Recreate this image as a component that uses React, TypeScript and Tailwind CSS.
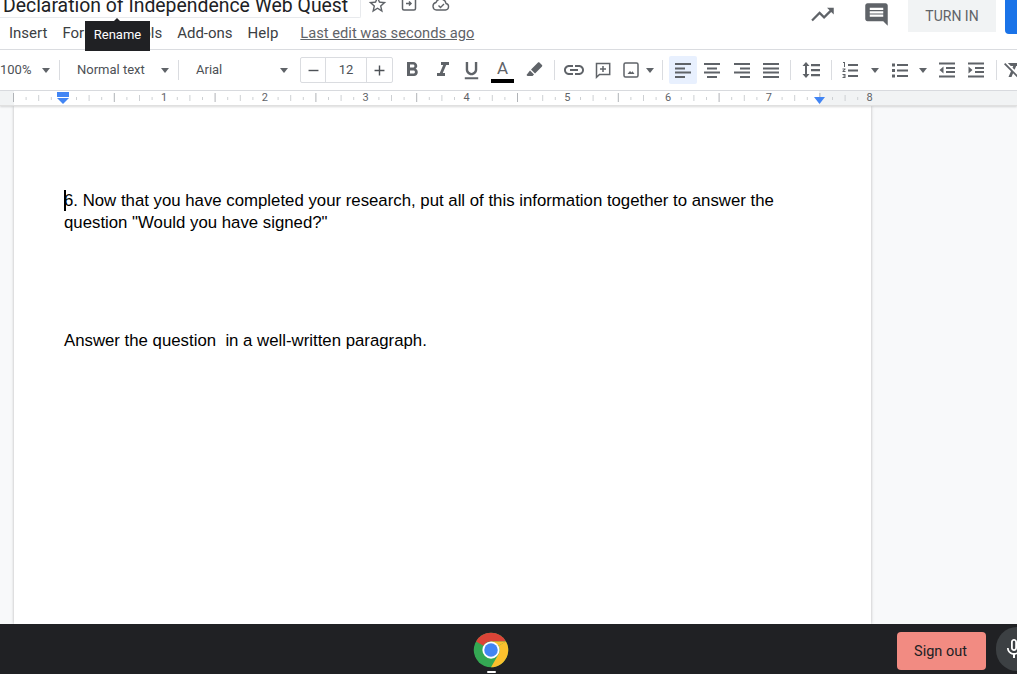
import React from "react";
import {
  MdStarBorder, MdTrendingUp, MdComment, MdFormatBold, MdFormatItalic, MdFormatUnderlined, MdLink,
  MdFormatClear, MdMicNone, MdRemove, MdAdd,
} from "react-icons/md";

const Caret = ({ className = "" }: { className?: string }) => (
  <span className={`w-0 h-0 border-x-[4.5px] border-x-transparent border-t-[5px] border-t-[#5f6368] shrink-0 ${className}`} />
);
const Div = ({ className = "" }: { className?: string }) => (
  <span className={`w-px h-[20px] bg-[#dadce0] shrink-0 ${className}`} />
);
const Ic = ({ I, size = 24, className = "" }: { I: any; size?: number; className?: string }) => (
  <span className={`w-[20px] h-[20px] flex items-center justify-center shrink-0 text-[#5f6368] ${className}`}>
    <I size={size} className="shrink-0" />
  </span>
);
const Draw = ({ d, className = "", extra }: { d: string; className?: string; extra?: React.ReactNode }) => (
  <svg width="20" height="20" viewBox="0 0 20 20" className={`shrink-0 text-[#5f6368] ${className}`} fill="currentColor">
    <path d={d} />
    {extra}
  </svg>
);

const ALIGN_L = "M2 3h16v2H2zM2 7.500h10v2H2zM2 11.500h16v2H2zM2 16h10v2H2z";
const ALIGN_C = "M2 3h16v2H2zM5 7.500h10v2H5zM2 11.500h16v2H2zM5 16h10v2H5z";
const ALIGN_R = "M2 3h16v2H2zM8 7.500h10v2H8zM2 11.500h16v2H2zM8 16h10v2H8z";
const ALIGN_J = "M2 3h16v2H2zM2 7.500h16v2H2zM2 11.500h16v2H2zM2 16h16v2H2z";
const SPACING = "M5 2l3.500 4H6v8h2.500L5 18l-3.500-4H4V6H1.500zM10 4h9v2.200h-9zM10 9h9v2.200h-9zM10 14h9v2.200h-9z";
const NUMBERED = "M8 4h10v2H8zM8 9.500h10v2H8zM8 15h10v2H8zM3 2h2v5H4V3H3zM2.500 8.500h3v.9L3.800 11h1.700v1h-3v-.9L4.200 9.500H2.500zM2.500 14h3v4h-3v-1h2v-.5h-1.200v-.9h1.200V15h-2z";
const BULLETS = "M7 4h11v2H7zM7 9.500h11v2H7zM7 15h11v2H7zM2 3.500h3v3H2zM2 9h3v3H2zM2 14.500h3v3H2z";
const INDENT_L = "M2 2.500h16v2H2zM9 7h9v2H9zM9 11h9v2H9zM2 15.500h16v2H2zM6.500 6.500v7L2.500 10z";
const INDENT_R = "M2 2.500h16v2H2zM9 7h9v2H9zM9 11h9v2H9zM2 15.500h16v2H2zM2.500 6.500v7l4-3.500z";
const MARKER = "M14 2.500c.4-.4 1-.4 1.400 0l2.600 2.600c.4.4.4 1 0 1.400l-7 7-4-4zM6 10.500l4 4-1.500 1.500H3.500l-1-1z";

function RulerTicks() {
  const t: React.ReactNode[] = [];
  for (let i = 0; i < 69; i++) {
    const x = 13.5 + (i * 100.8) / 8;
    if (i % 8 === 0 || i % 8 === 4) continue;
    t.push(<line key={i} x1={x} x2={x} y1={i % 2 === 0 ? 4 : 6} y2={i % 2 === 0 ? 10 : 9} stroke="#cdd0d3" strokeWidth="1" />);
  }
  return (
    <svg className="absolute left-0 top-0" width="1017" height="14">
      {Array.from({ length: 9 }).map((_, i) => (
        <line key={i} x1={13.5 + 100.8 * i} x2={13.5 + 100.8 * i} y1="2" y2="11" stroke="#b0b3b7" />
      ))}
      {t}
    </svg>
  );
}

function Chrome() {
  return (
    <svg width="36" height="36" viewBox="0 0 48 48">
      <circle cx="24" cy="24" r="23" fill="#34a853" />
      <path d="M24 1a23 23 0 0 1 19.900 11.500H24a11.500 11.500 0 0 0-10 5.800L4.100 12.500A23 23 0 0 1 24 1z" fill="#db4437" />
      <path d="M43.900 12.500A23 23 0 0 1 24 47l10-17.200a11.500 11.500 0 0 0 0-11.600z" fill="#fbc02d" />
      <path d="M43.900 12.500H24l10 5.700z" fill="#fbc02d" />
      <circle cx="24" cy="24" r="11.500" fill="#fff" />
      <circle cx="24" cy="24" r="9" fill="#4285f4" />
    </svg>
  );
}

export default function App() {
  return (
    <div className="w-[1017px] h-[674px] flex flex-col overflow-hidden bg-white relative font-['Roboto',sans-serif]">
      {/* Title and menu */}
      <header className="h-[50px] shrink-0 border-b border-[#dadce0] flex justify-between overflow-hidden">
        <div className="flex flex-col">
          <div className="h-[18px] flex items-start">
            <span className="w-[361px] h-[18px] pl-[3px] border-r border-b border-[#e8eaed] rounded-br-[2px] text-[19.400px] leading-[12px] text-[#202124] whitespace-nowrap">
              Declaration of Independence Web Quest
            </span>
            <MdStarBorder size={21} className="ml-[6px] -mt-[6px] text-[#5f6368]" />
            <svg width="18" height="18" viewBox="0 0 18 18" className="ml-[12px] -mt-[4px] text-[#5f6368]" fill="none" stroke="currentColor" strokeWidth="1.500">
              <rect x="2.500" y="1" width="13" height="13" rx="1.500" />
              <path d="M6 7.500h5M9 5.500l2 2-2 2" />
            </svg>
            <svg width="20" height="20" viewBox="0 0 20 20" className="ml-[13px] -mt-[5px] text-[#5f6368]" fill="none" stroke="currentColor" strokeWidth="1.400">
              <path d="M5.500 15h9a3.300 3.300 0 0 0 .5-6.500A5.200 5.200 0 0 0 5 7.500 3.800 3.800 0 0 0 5.500 15z" />
              <path d="M7.500 10.500l2 2 3.500-3.500" />
            </svg>
          </div>
          <nav className="flex items-center gap-[15px] h-[30px] text-[15px] text-[#3c4043] pl-[9px]">
            <span>Insert</span>
            <span>Format</span>
            <span>Tools</span>
            <span>Add-ons</span>
            <span>Help</span>
            <span className="ml-[7px] text-[14.700px] text-[#5f6368] underline">Last edit was seconds ago</span>
          </nav>
        </div>
        <div className="flex items-start">
          <MdTrendingUp size={27} className="mt-[1px] text-[#5f6368]" />
          <MdComment size={27} className="ml-[27px] mt-[1px] text-[#5f6368]" />
          <span className="ml-[18px] w-[88px] h-[32px] bg-[#f1f3f4] text-[#5f6368] text-[14px] flex items-center justify-center">TURN IN</span>
          <span className="ml-[9px] w-[12px] h-[34px] bg-[#1a73e8] rounded-bl-[4px]" />
        </div>
      </header>

      {/* Toolbar */}
      <div className="h-[41px] shrink-0 border-b border-[#dadce0] flex items-center text-[#4d5156] overflow-hidden text-[13px] whitespace-nowrap">
        <span className="w-[29px] shrink-0">100%</span>
        <Caret className="ml-[13px]" />
        <Div className="ml-[9px]" />
        <span className="ml-[17px] w-[70px] shrink-0">Normal text</span>
        <Caret className="ml-[14px]" />
        <Div className="ml-[9px]" />
        <span className="ml-[17px] w-[84px] shrink-0">Arial</span>
        <Caret className="ml-[0px]" />
        <span className="ml-[12px] w-[93px] h-[26px] border border-[#dadce0] rounded-[2px] flex items-center shrink-0">
          <span className="w-[24px] h-full flex items-center justify-center"><MdRemove size={17} /></span>
          <span className="w-[42px] h-full border-x border-[#dadce0] flex items-center justify-center text-[13px]">12</span>
          <span className="flex-1 h-full flex items-center justify-center"><MdAdd size={17} /></span>
        </span>
        <Ic I={MdFormatBold} className="ml-[9px]" />
        <Ic I={MdFormatItalic} className="ml-[11px]" />
        <Ic I={MdFormatUnderlined} size={23} className="ml-[8px]" />
        <span className="ml-[10px] w-[23px] h-[26px] flex flex-col items-center shrink-0 mt-[1px]">
          <span className="text-[17px] leading-[20px] text-[#5f6368]">A</span>
          <span className="w-[23px] h-[4px] bg-black mt-[1px]" />
        </span>
        <Draw d={MARKER} className="ml-[10px]" />
        <Div className="ml-[10px]" />
        <Ic I={MdLink} className="ml-[9px]" />
        <svg width="20" height="20" viewBox="0 0 20 20" className="ml-[9px] shrink-0 text-[#5f6368]" fill="none" stroke="currentColor" strokeWidth="1.500">
          <path d="M3.500 3.500h13.200v11H6.500l-3 2.800z" />
          <path d="M10 6v6M7 9h6" />
        </svg>
        <svg width="20" height="20" viewBox="0 0 20 20" className="ml-[8px] shrink-0 text-[#5f6368]" fill="none" stroke="currentColor" strokeWidth="1.500">
          <rect x="3" y="3" width="14" height="14" rx="1.500" />
          <path d="M6.500 14l2.500-3 1.500 1.500 1-1.200 2 2.700z" fill="currentColor" stroke="none" />
        </svg>
        <Caret className="ml-[5px]" />
        <Div className="ml-[8px]" />
        <span className="ml-[6px] w-[28px] h-[28px] bg-[#e8f0fe] flex items-center justify-center rounded-[2px] shrink-0">
          <Draw d={ALIGN_L} className="text-[#1a73e8]" />
        </span>
        <Draw d={ALIGN_C} className="ml-[5px]" />
        <Draw d={ALIGN_R} className="ml-[10px]" />
        <Draw d={ALIGN_J} className="ml-[9px]" />
        <Div className="ml-[9px]" />
        <Draw d={SPACING} className="ml-[10px]" />
        <Div className="ml-[10px]" />
        <Draw d={NUMBERED} className="ml-[8px]" />
        <Caret className="ml-[11px]" />
        <Draw d={BULLETS} className="ml-[11px]" />
        <Caret className="ml-[9px]" />
        <Draw d={INDENT_L} className="ml-[10px]" />
        <Draw d={INDENT_R} className="ml-[9px]" />
        <Div className="ml-[10px]" />
        <Ic I={MdFormatClear} className="ml-[7px]" />
      </div>

      {/* Ruler */}
      <div className="h-[15px] shrink-0 bg-[#f1f3f4] border-b border-[#e0e0e0] shadow-[0_1px_2px_rgba(0,0,0,0.15)] relative z-10 flex">
        <div className="absolute left-[14px] top-0 h-[14px] w-[805px] bg-white" />
        <RulerTicks />
        <div className="relative flex pl-[161px] text-[11px] leading-[14px] text-[#5f6368]">
          {[1, 2, 3, 4, 5, 6, 7, 8].map((n) => (
            <span key={n} className="w-[100.8px] shrink-0">{n}</span>
          ))}
        </div>
        <svg className="absolute left-[56px] top-[1px]" width="14" height="14" viewBox="0 0 14 14">
          <rect x="1" y="0" width="12" height="5" fill="#4285f4" />
          <path d="M1 6h12l-6 6z" fill="#4285f4" />
        </svg>
        <svg className="absolute left-[813px] top-[4px]" width="13" height="10" viewBox="0 0 13 10">
          <path d="M1 2h11L6.500 9z" fill="#4285f4" />
        </svg>
      </div>

      {/* Document */}
      <main className="flex-1 min-h-0 bg-[#f8f9fa] overflow-hidden">
        <div className="ml-[14px] w-[857px] h-full bg-white shadow-[0_0_3px_rgba(60,64,67,0.35)] pl-[50px] pt-[84px] font-['Liberation_Sans',Arial,sans-serif] text-[16.8px] leading-[22px] text-black relative">
          <span className="absolute left-[50px] top-[84px] w-[2px] h-[21px] bg-black" />
          <p className="w-[740px]">6. Now that you have completed your research, put all of this information together to answer the question "Would you have signed?"</p>
          <p className="mt-[96px] whitespace-pre">Answer the question  in a well-written paragraph.</p>
        </div>
      </main>

      {/* Shelf */}
      <footer className="h-[50px] shrink-0 bg-[#202124] relative flex items-center justify-end">
        <div className="absolute left-[473px] top-[8px] flex flex-col items-center">
          <Chrome />
          <span className="w-[9px] h-[2px] bg-white rounded-full mt-[3px]" />
        </div>
        <span className="w-[89px] h-[38px] mt-[4px] pt-[1px] pr-[2px] bg-[#f28b82] rounded-[4px] text-[#202124] text-[14.500px] flex items-center justify-center mr-[10px]">Sign out</span>
        <span className="w-[21px] h-[44px] rounded-l-full bg-[#3c4043] text-white flex items-center overflow-hidden pl-[6px] shrink-0">
          <MdMicNone size={24} className="shrink-0" />
        </span>
      </footer>

      {/* Tooltip */}
      <div className="absolute left-[85px] top-[21px] w-[65px] h-[30px] pb-[2px] bg-[#202124] text-white text-[13px] flex items-center justify-center z-20">
        Rename
        <span className="absolute left-[28px] -top-[3px] w-0 h-0 border-x-[4px] border-x-transparent border-b-[4px] border-b-[#202124]" />
      </div>
    </div>
  );
}
